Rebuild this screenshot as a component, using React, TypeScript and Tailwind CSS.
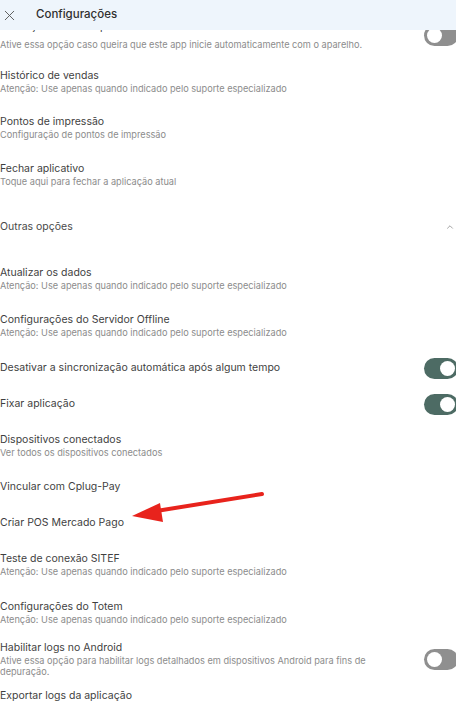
import { X, ChevronUp } from "lucide-react";

type Item = {
  title: string;
  sub?: string;
  toggle?: "on" | "off";
  compact?: boolean;
};

const topItems: Item[] = [
  { title: "Iniciar junto com o aparelho", sub: "Ative essa opção caso queira que este app inicie automaticamente com o aparelho.", toggle: "off" },
  { title: "Histórico de vendas", sub: "Atenção: Use apenas quando indicado pelo suporte especializado" },
  { title: "Pontos de impressão", sub: "Configuração de pontos de impressão" },
  { title: "Fechar aplicativo", sub: "Toque aqui para fechar a aplicação atual" },
];

const otherItems: Item[] = [
  { title: "Atualizar os dados", sub: "Atenção: Use apenas quando indicado pelo suporte especializado" },
  { title: "Configurações do Servidor Offline", sub: "Atenção: Use apenas quando indicado pelo suporte especializado" },
  { title: "Desativar a sincronização automática após algum tempo", toggle: "on" },
  { title: "Fixar aplicação", toggle: "on" },
  { title: "Dispositivos conectados", sub: "Ver todos os dispositivos conectados" },
  { title: "Vincular com Cplug-Pay" },
  { title: "Criar POS Mercado Pago" },
  { title: "Teste de conexão SITEF", sub: "Atenção: Use apenas quando indicado pelo suporte especializado" },
  { title: "Configurações do Totem", sub: "Atenção: Use apenas quando indicado pelo suporte especializado" },
  {
    title: "Habilitar logs no Android",
    sub: "Ative essa opção para habilitar logs detalhados em dispositivos Android para fins de depuração.",
    toggle: "off",
    compact: true,
  },
  { title: "Exportar logs da aplicação" },
];

function Toggle({ on }: { on: boolean }) {
  return (
    <div
      className={
        on
          ? "w-[34px] h-[21px] rounded-full bg-[#4d6b64] flex items-center justify-end px-[3px] shrink-0 -mr-[2px]"
          : "w-[34px] h-[21px] rounded-full bg-[#8f8f8f] flex items-center justify-start px-[3px] shrink-0 -mr-[2px]"
      }
    >
      <div className="w-[15px] h-[15px] rounded-full bg-white" />
    </div>
  );
}

function Row({ item, first, tall }: { item: Item; first?: boolean; tall?: boolean }) {
  let box = "flex items-center gap-4 min-h-[36px] py-[5px]";
  if (item.sub) box = tall ? "flex items-center gap-4 min-h-[47.5px] py-[5px]" : "flex items-center gap-4 min-h-[46.5px] py-[5px]";
  if (item.compact) box = "flex items-center gap-4 pt-[5px] pb-[2px]";
  return (
    <div className={box}>
      <div className="flex-1 min-w-0">
        <div className={first ? "text-[10.5px] leading-[12px] text-[#3f3f3f] mb-[6px]" : "text-[10.5px] leading-[12px] text-[#3f3f3f] mb-[1px]"}>
          {item.title}
        </div>
        {item.sub && <div className="text-[9.2px] leading-[11px] text-[#8c8c8c] pr-10">{item.sub}</div>}
      </div>
      {item.toggle && <Toggle on={item.toggle === "on"} />}
    </div>
  );
}

export default function App() {
  return (
    <div className="relative w-[456px] h-[702px] overflow-hidden bg-white flex flex-col" style={{ fontFamily: "Inter, 'Noto Sans', sans-serif" }}>
      {/* Header */}
      <div className="h-[30px] shrink-0 bg-[#eef5fc] flex items-center">
        <X size={17} strokeWidth={1.3} className="ml-[1px] text-[#555]" />
        <span className="ml-[18px] text-[11.5px] font-medium text-[#2f2f2f]">Configurações</span>
      </div>

      {/* scrolled list */}
      <div className="flex-1 overflow-hidden">
        <div className="-mt-[18px]">
          {topItems.map((it, i) => (
            <Row key={it.title} item={it} first={i === 0} />
          ))}

          {/* Outras opções */}
          <div className="flex items-center justify-between h-[57px]">
            <span className="text-[10.5px] text-[#4a4a4a]">Outras opções</span>
            <ChevronUp size={10} strokeWidth={1.6} className="text-[#777] mr-[1px]" />
          </div>

          {otherItems.map((it) => (
            <Row key={it.title} item={it} tall />
          ))}
        </div>
      </div>

      {/* annotation arrow */}
      <svg className="absolute left-0 top-0 pointer-events-none" width="456" height="702">
        <line x1="262" y1="494" x2="150" y2="512" stroke="#e8231c" strokeWidth="4" strokeLinecap="round" />
        <polygon points="132,516 160,503 163,522" fill="#e8231c" />
      </svg>
    </div>
  );
}
